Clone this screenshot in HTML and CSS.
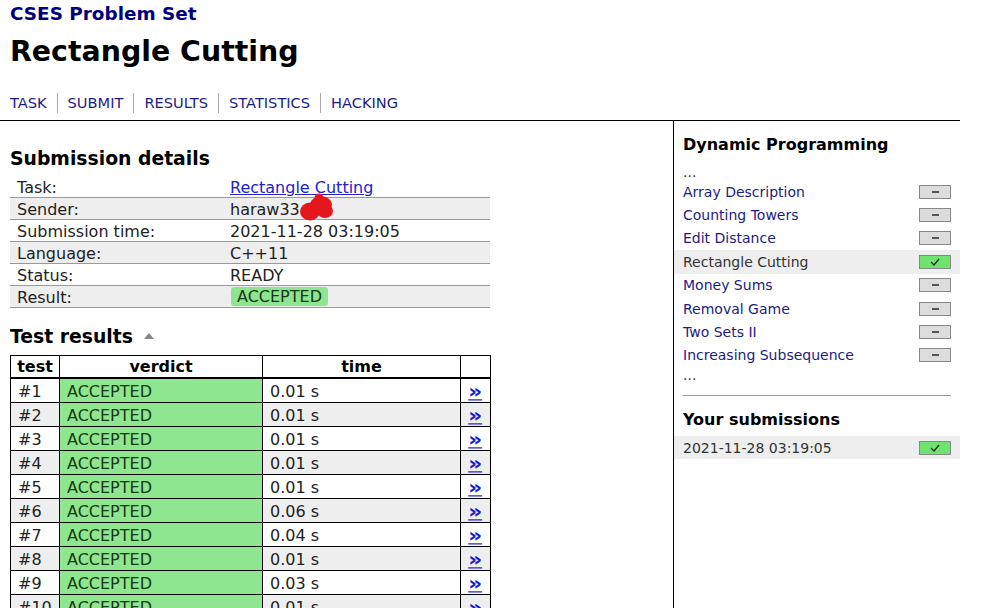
FILE: index.html
```html
<!DOCTYPE html>
<html lang="en">
<head>
<meta charset="utf-8">
<title>CSES - Rectangle Cutting - Results</title>
<link rel="stylesheet" href="styles.css">
</head>
<body>
<div class="page">
  <header class="header">
    <div class="site-title">CSES Problem Set</div>
    <h1 class="task-title">Rectangle Cutting</h1>
    <nav class="nav">
      <a href="#">TASK</a><a href="#">SUBMIT</a><a href="#">RESULTS</a><a href="#">STATISTICS</a><a href="#">HACKING</a>
    </nav>
  </header>
  <div class="layout">
    <main class="content">
      <h2 class="section-title">Submission details</h2>
      <table class="details">
        <tbody>
          <tr><td class="label">Task:</td><td><a class="task-link" href="#">Rectangle Cutting</a></td></tr>
          <tr><td class="label">Sender:</td><td class="sender">haraw33<svg class="scribble" width="34" height="28" viewBox="0 0 34 28"><ellipse cx="10" cy="18.5" rx="10" ry="9" fill="#e3171d"/><ellipse cx="21" cy="12" rx="11" ry="9" fill="#e3171d"/><ellipse cx="25" cy="18" rx="8" ry="7" fill="#e3171d"/><circle cx="19" cy="5" r="4.5" fill="#e3171d"/></svg></td></tr>
          <tr><td class="label">Submission time:</td><td>2021-11-28 03:19:05</td></tr>
          <tr><td class="label">Language:</td><td>C++11</td></tr>
          <tr><td class="label">Status:</td><td>READY</td></tr>
          <tr><td class="label">Result:</td><td><span class="badge">ACCEPTED</span></td></tr>
        </tbody>
      </table>
      <h2 class="section-title results-title">Test results<span class="toggle"></span></h2>
      <table class="results">
        <colgroup><col class="c-test"><col class="c-verdict"><col class="c-time"><col class="c-link"></colgroup>
        <thead>
          <tr><th>test</th><th>verdict</th><th>time</th><th></th></tr>
        </thead>
        <tbody>
          <tr><td>#1</td><td class="verdict">ACCEPTED</td><td>0.01 s</td><td class="more"><a href="#">»</a></td></tr>
          <tr><td>#2</td><td class="verdict">ACCEPTED</td><td>0.01 s</td><td class="more"><a href="#">»</a></td></tr>
          <tr><td>#3</td><td class="verdict">ACCEPTED</td><td>0.01 s</td><td class="more"><a href="#">»</a></td></tr>
          <tr><td>#4</td><td class="verdict">ACCEPTED</td><td>0.01 s</td><td class="more"><a href="#">»</a></td></tr>
          <tr><td>#5</td><td class="verdict">ACCEPTED</td><td>0.01 s</td><td class="more"><a href="#">»</a></td></tr>
          <tr><td>#6</td><td class="verdict">ACCEPTED</td><td>0.06 s</td><td class="more"><a href="#">»</a></td></tr>
          <tr><td>#7</td><td class="verdict">ACCEPTED</td><td>0.04 s</td><td class="more"><a href="#">»</a></td></tr>
          <tr><td>#8</td><td class="verdict">ACCEPTED</td><td>0.01 s</td><td class="more"><a href="#">»</a></td></tr>
          <tr><td>#9</td><td class="verdict">ACCEPTED</td><td>0.03 s</td><td class="more"><a href="#">»</a></td></tr>
          <tr><td>#10</td><td class="verdict">ACCEPTED</td><td>0.01 s</td><td class="more"><a href="#">»</a></td></tr>
        </tbody>
      </table>
    </main>
    <aside class="sidebar">
      <h3 class="side-title">Dynamic Programming</h3>
      <div class="ellipsis top">...</div>
      <ul class="task-list">
        <li class="task-item"><a href="#">Array Description</a><span class="status none"></span></li>
        <li class="task-item"><a href="#">Counting Towers</a><span class="status none"></span></li>
        <li class="task-item"><a href="#">Edit Distance</a><span class="status none"></span></li>
        <li class="task-item current"><span>Rectangle Cutting</span><span class="status full"><svg width="10" height="8" viewBox="0 0 10 8"><polyline points="1,4 4,7 9,1" fill="none" stroke="#222" stroke-width="1.2"/></svg></span></li>
        <li class="task-item"><a href="#">Money Sums</a><span class="status none"></span></li>
        <li class="task-item"><a href="#">Removal Game</a><span class="status none"></span></li>
        <li class="task-item"><a href="#">Two Sets II</a><span class="status none"></span></li>
        <li class="task-item"><a href="#">Increasing Subsequence</a><span class="status none"></span></li>
      </ul>
      <div class="ellipsis">...</div>
      <hr class="divider">
      <h3 class="side-title subs-title">Your submissions</h3>
      <div class="submission-row"><span>2021-11-28 03:19:05</span><span class="status full"><svg width="10" height="8" viewBox="0 0 10 8"><polyline points="1,4 4,7 9,1" fill="none" stroke="#222" stroke-width="1.2"/></svg></span></div>
    </aside>
  </div>
</div>
</body>
</html>
```
FILE: styles.css
```css
body {
  margin: 0;
  font-family: Verdana, "DejaVu Sans", sans-serif;
  color: #222;
  background: #fff;
}

.page {
  width: 960px;
}

.header {
  padding-left: 10px;
}

.site-title {
  font-size: 18.4px;
  font-weight: bold;
  line-height: 28px;
  color: #00007f;
}

.task-title {
  margin: 6px 0 0;
  font-size: 28.4px;
  line-height: 36px;
  color: #000;
}

.nav {
  display: flex;
  margin-top: 22.6px;
  margin-bottom: 7.4px;
  height: 20px;
  line-height: 20px;
  font-size: 14.6px;
}

.nav a {
  color: #1c1c80;
  text-decoration: none;
  padding: 0 10px;
  border-left: 1px solid #aaa;
}

.nav a:first-child {
  padding-left: 0;
  border-left: 0;
}

.layout {
  display: flex;
  border-top: 1px solid #000;
}

.content {
  width: 673px;
  flex: none;
  padding-left: 10px;
  box-sizing: border-box;
}

.section-title {
  font-size: 18.8px;
  line-height: 24px;
  margin: 25.8px 0 5.7px;
  color: #000;
}

.results-title {
  margin: 17px 0 5.5px;
}

.toggle {
  display: inline-block;
  width: 0;
  height: 0;
  margin-left: 11px;
  border-left: 5px solid transparent;
  border-right: 5px solid transparent;
  border-bottom: 6px solid #888;
  vertical-align: 4px;
}

.details {
  width: 480px;
  border-collapse: collapse;
  table-layout: fixed;
  font-size: 16px;
}

.details td {
  padding: 2px 7px 0 7px;
  line-height: 19px;
  border-bottom: 1px solid #999;
  white-space: nowrap;
}

.details td.label {
  width: 199px;
}

.details tr:nth-child(even) td {
  background: #eee;
}

.task-link {
  color: #2222cc;
}

.sender {
  position: relative;
}

.scribble {
  position: absolute;
  left: 77px;
  top: -5px;
}

.badge {
  display: inline-block;
  margin-left: 1px;
  padding: 0 6px;
  line-height: 19px;
  border-radius: 3px;
  background: #8fe58f;
  color: #163816;
  vertical-align: top;
  margin-top: -1px;
}

.results {
  width: 480px;
  border-collapse: collapse;
  table-layout: fixed;
  font-size: 16px;
  border: 1px solid #000;
}

.c-test { width: 49px; }
.c-verdict { width: 203px; }
.c-time { width: 198px; }
.c-link { width: 30px; }

.results th {
  padding: 1px 0 0;
  line-height: 20px;
  border: 1px solid #000;
  border-bottom: 2px solid #000;
  text-align: center;
  color: #000;
}

.results td {
  padding: 2px 7px 0;
  line-height: 21px;
  height: 21px;
  border: 1px solid #000;
  white-space: nowrap;
}

.results tbody tr:nth-child(even) td {
  background: #eee;
}

.results tbody tr td.verdict {
  background: #8ee78e;
  color: #163816;
}

.results td.more {
  padding: 2px 0 0;
  text-align: center;
}

.more a {
  display: inline-block;
  color: #1a1acc;
  font-weight: bold;
  font-size: 16px;
  line-height: 21px;
  transform: scale(1.35, 1.2);
}

.sidebar {
  flex: 1;
  border-left: 1px solid #000;
}

.side-title {
  margin: 14px 0 0;
  padding: 0 9px;
  font-size: 16px;
  line-height: 20px;
  color: #000;
}

.ellipsis {
  padding: 0 9px;
  font-size: 14px;
  line-height: 16px;
  color: #333;
}

.ellipsis.top {
  margin-top: 9px;
}

.task-list {
  list-style: none;
  margin: 0;
  padding: 0;
}

.task-item {
  display: flex;
  justify-content: space-between;
  align-items: center;
  height: 23.4px;
  padding: 0 9px;
  font-size: 14px;
}

.task-item a {
  color: #1c1c80;
  text-decoration: none;
}

.task-item.current {
  background: #eee;
  color: #333;
}

.status {
  display: flex;
  align-items: center;
  justify-content: center;
  width: 32px;
  height: 14px;
  box-sizing: border-box;
  border: 1px solid #888;
  background: #dcdcdc;
}

.status.none::before {
  content: "";
  width: 7px;
  height: 2px;
  background: #555;
}

.status.full {
  background: #6ee46e;
}

.ellipsis + .divider {
  margin-top: 11.5px;
}

.divider {
  margin: 10.5px 9px 0;
  border: 0;
  border-top: 1px solid #999;
}

.subs-title {
  margin-top: 14px;
}

.submission-row {
  display: flex;
  justify-content: space-between;
  align-items: center;
  margin-top: 6.5px;
  height: 22.5px;
  padding: 1px 9px 0;
  box-sizing: border-box;
  background: #eee;
  font-size: 14px;
  color: #333;
}
```
